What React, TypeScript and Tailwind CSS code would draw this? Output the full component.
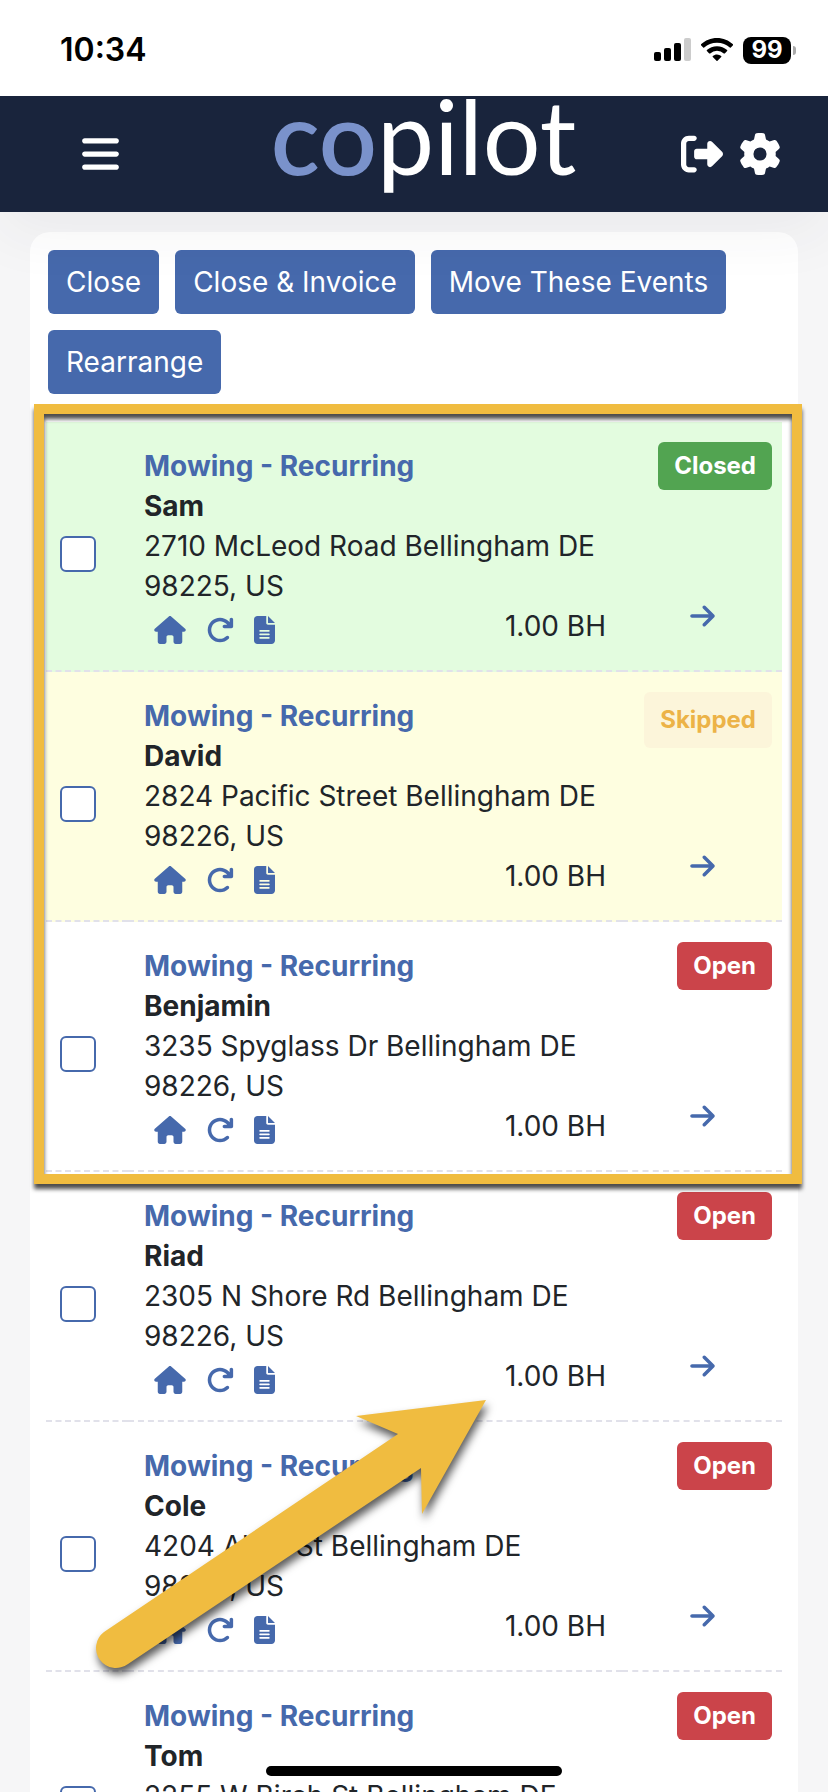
import { useState } from 'react'
import {
  FaArrowRight,
  FaArrowRotateRight,
  FaBars,
  FaFileLines,
  FaGear,
  FaHouse,
  FaRightFromBracket,
} from 'react-icons/fa6'

type Status = 'Closed' | 'Skipped' | 'Open'

interface Visit {
  id: number
  client: string
  street: string
  zip: string
  status: Status
}

const visits: Visit[] = [
  { id: 1, client: 'Sam', street: '2710 McLeod Road Bellingham DE', zip: '98225, US', status: 'Closed' },
  { id: 2, client: 'David', street: '2824 Pacific Street Bellingham DE', zip: '98226, US', status: 'Skipped' },
  { id: 3, client: 'Benjamin', street: '3235 Spyglass Dr Bellingham DE', zip: '98226, US', status: 'Open' },
  { id: 4, client: 'Riad', street: '2305 N Shore Rd Bellingham DE', zip: '98226, US', status: 'Open' },
  { id: 5, client: 'Cole', street: '4204 Alice St Bellingham DE', zip: '98226, US', status: 'Open' },
  { id: 6, client: 'Tom', street: '2255 W Birch St Bellingham DE', zip: '98225, US', status: 'Open' },
]

const bulkActions = ['Close', 'Close & Invoice', 'Move These Events', 'Rearrange']

const rowColor: Record<Status, string> = {
  Closed: 'bg-[#e3fcdf]',
  Skipped: 'bg-[#fefee0]',
  Open: 'bg-white',
}

const badgeColor: Record<Status, string> = {
  Closed: 'h-12 bg-[#52a451] text-white',
  Skipped: 'h-14 bg-[#fcf5da] text-[#ecb347]',
  Open: 'h-12 bg-[#cb444a] text-white',
}

function StatusBar() {
  return (
    <div className="relative z-20 flex h-24 shrink-0 items-center justify-between bg-white pt-1 pr-8 pl-[60px]">
      <span className="text-[32px] font-semibold text-black">10:34</span>
      <div className="flex items-center gap-[10px]">
        <svg width="37" height="24" viewBox="0 0 37 24" aria-hidden="true">
          <rect x="0" y="14" width="7" height="9" rx="2" />
          <rect x="10" y="10" width="7" height="13" rx="2" />
          <rect x="20" y="5" width="7" height="18" rx="2" />
          <rect x="30" y="0" width="7" height="23" rx="2" fill="#ccc" />
        </svg>
        <svg width="32" height="24" viewBox="0 0 32 24" aria-hidden="true">
          <path d="M16 0C9.800 0 4.200 2.400 0 6.300q-.4.500 0 1l2.200 2.200q.5.400 1 0C6.600 6.400 11 4.700 16 4.700s9.400 1.700 12.800 4.800q.5.400 1 0L32 7.300q.4-.5 0-1C27.800 2.400 22.200 0 16 0Z" />
          <path d="M16 8.200c-3.900 0-7.400 1.500-10.100 3.900q-.5.500 0 1l2.300 2.300q.5.400 1 0a10 10 0 0 1 13.600 0q.5.400 1 0l2.300-2.300q.5-.5 0-1A15 15 0 0 0 16 8.200Z" />
          <path d="M16 16.400c-1.600 0-3.100.6-4.200 1.600q-.5.500 0 1l3.700 3.700q.5.400 1 0l3.700-3.700q.5-.5 0-1A6.300 6.300 0 0 0 16 16.400Z" />
        </svg>
        <div className="flex items-center gap-[2px]">
          <span className="flex h-[27px] w-12 items-center justify-center rounded-lg bg-black text-2xl font-bold text-white">
            99
          </span>
          <span className="h-[9px] w-[3px] rounded-r-full bg-[#aaa]" />
        </div>
      </div>
    </div>
  )
}

function Header() {
  return (
    <header className="relative z-10 grid h-[116px] shrink-0 grid-cols-[1fr_auto_1fr] items-center bg-[#19243c] pr-[47px] pl-[82px] text-white shadow-[0_20px_60px_rgba(50,50,70,0.06)]">
      <button type="button" aria-label="Menu" className="justify-self-start">
        <FaBars className="h-[42px] w-[37px]" />
      </button>
      <a href="#home" className="mr-4 self-start font-[Lato,sans-serif] text-[102px] leading-[80px]">
        <span className="font-semibold text-[#7a92cb]">co</span>pilot
      </a>
      <div className="flex items-center gap-4 justify-self-end">
        <button type="button" aria-label="Sign out">
          <FaRightFromBracket size={42} />
        </button>
        <button type="button" aria-label="Settings">
          <FaGear size={42} />
        </button>
      </div>
    </header>
  )
}

function VisitRow({ visit, checked, onToggle }: { visit: Visit; checked: boolean; onToggle: () => void }) {
  return (
    <tr className={rowColor[visit.status]}>
      <td className="w-[82px] border-b-2 border-dashed border-[#e1e1ea] pt-4 pl-[14px] align-middle">
        <input
          type="checkbox"
          checked={checked}
          onChange={onToggle}
          aria-label={`Select ${visit.client}`}
          className="block size-9 appearance-none rounded-md border-2 border-[#4669ac] bg-white checked:bg-[#4669ac]"
        />
      </td>
      <td className="border-b-2 border-dashed border-[#e1e1ea] px-4 py-6">
        <a href="#visit" className="block font-bold text-[#4669ac]">
          Mowing - Recurring
        </a>
        <p className="font-bold">{visit.client}</p>
        <p>{visit.street}</p>
        <p>{visit.zip}</p>
        <div className="flex justify-between pl-[10px]">
          <span className="flex items-center gap-5 pt-2 text-[#4669ac]">
            <FaHouse className="h-7 w-8" />
            <FaArrowRotateRight className="size-7" />
            <FaFileLines className="h-7 w-[21px]" />
          </span>
          <span>1.00 BH</span>
        </div>
      </td>
      <td className="w-[160px] border-b-2 border-dashed border-[#e1e1ea] pt-5 pr-[10px] align-top">
        <div className="flex h-[188px] flex-col items-end justify-between">
          <span className={`flex items-center rounded-md px-4 text-2xl font-bold ${badgeColor[visit.status]}`}>
            {visit.status}
          </span>
          <a href="#visit" aria-label={`Open ${visit.client}`} className="mr-[57px] text-[#4669ac]">
            <FaArrowRight className="h-7 w-[25px]" />
          </a>
        </div>
      </td>
    </tr>
  )
}

export default function App() {
  const [selected, setSelected] = useState<number[]>([])

  const toggle = (id: number) => {
    setSelected((s) => (s.includes(id) ? s.filter((x) => x !== id) : [...s, id]))
  }

  return (
    <div className="relative flex h-screen flex-col overflow-hidden bg-[#f6f6f7] font-[Inter,sans-serif]">
      <StatusBar />
      <Header />
      <main className="min-h-0 flex-1 px-[30px] pt-5">
        <section className="rounded-t-[20px] bg-white px-4 pt-[18px]">
          <div className="flex flex-wrap gap-4 px-[2px]">
            {bulkActions.map((label) => (
              <button
                key={label}
                type="button"
                className="h-16 rounded-md bg-[#4669ac] px-[18px] text-[28px] text-white"
              >
                {label}
              </button>
            ))}
          </div>

          <div className="relative mt-7">
            <table className="w-full border-separate border-spacing-0 text-[28px] leading-10 text-[#212529]">
              <tbody>
                {visits.map((visit) => (
                  <VisitRow
                    key={visit.id}
                    visit={visit}
                    checked={selected.includes(visit.id)}
                    onToggle={() => toggle(visit.id)}
                  />
                ))}
              </tbody>
            </table>

            {/* callout frame around the first three visits */}
            <div className="pointer-events-none absolute -top-[18px] -right-5 -left-3 h-[780px] border-[10px] border-[#f0bc40] drop-shadow-[0_5px_2px_rgba(0,0,0,0.7)]" />

            <svg
              className="pointer-events-none absolute top-[968px] left-9 drop-shadow-[2px_6px_4px_rgba(0,0,0,0.65)]"
              width="420"
              height="300"
              viewBox="0 0 420 300"
              aria-hidden="true"
            >
              <path
                d="M404 10 274 26 316 44 22 242A20 20 0 0 0 46 274L339 78 340 124Z"
                fill="#f0bc40"
              />
            </svg>
          </div>
        </section>
      </main>
      <div className="absolute bottom-4 left-1/2 h-[10px] w-[296px] -translate-x-1/2 rounded-full bg-black" />
    </div>
  )
}
